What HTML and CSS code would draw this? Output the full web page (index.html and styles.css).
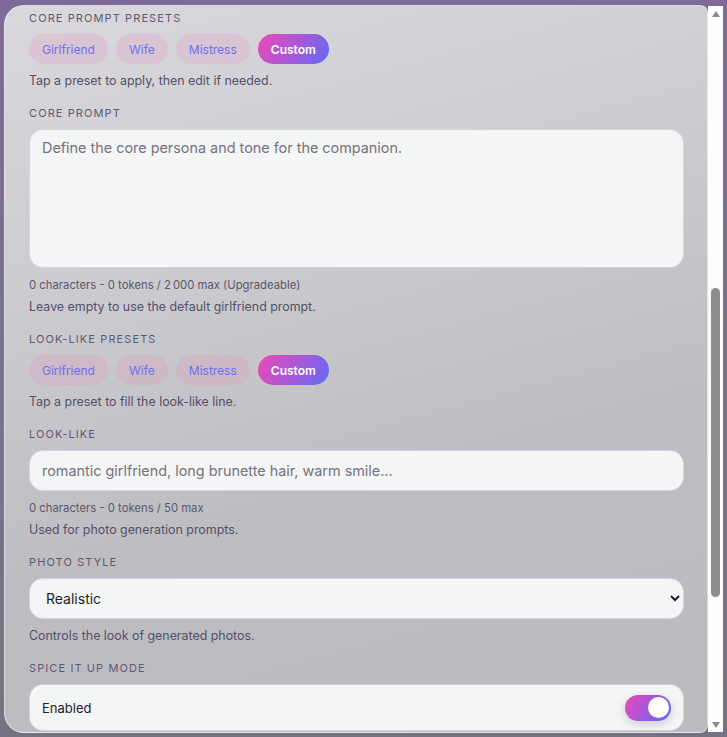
FILE: index.html
```html
<!DOCTYPE html>
<html lang="en">
<head>
<meta charset="utf-8">
<title>Companion settings</title>
<link rel="stylesheet" href="styles.css">
</head>
<body>
<div class="panel">
  <div class="content">
    <div class="form">
      <div class="field">
        <div class="label">Core prompt presets</div>
        <div class="chips">
          <button class="chip">Girlfriend</button>
          <button class="chip">Wife</button>
          <button class="chip">Mistress</button>
          <button class="chip active">Custom</button>
        </div>
        <p class="hint">Tap a preset to apply, then edit if needed.</p>
      </div>
      <div class="field">
        <div class="label">Core prompt</div>
        <textarea class="textarea" placeholder="Define the core persona and tone for the companion."></textarea>
        <p class="hint meta">0 characters - 0 tokens / 2&#8239;000 max (Upgradeable)</p>
        <p class="hint">Leave empty to use the default girlfriend prompt.</p>
      </div>
      <div class="field">
        <div class="label">Look-like presets</div>
        <div class="chips">
          <button class="chip">Girlfriend</button>
          <button class="chip">Wife</button>
          <button class="chip">Mistress</button>
          <button class="chip active">Custom</button>
        </div>
        <p class="hint">Tap a preset to fill the look-like line.</p>
      </div>
      <div class="field">
        <div class="label">Look-like</div>
        <input class="input" type="text" placeholder="romantic girlfriend, long brunette hair, warm smile...">
        <p class="hint meta">0 characters - 0 tokens / 50 max</p>
        <p class="hint">Used for photo generation prompts.</p>
      </div>
      <div class="field">
        <div class="label">Photo style</div>
        <select class="select">
          <option>Realistic</option>
          <option>Anime</option>
        </select>
        <p class="hint">Controls the look of generated photos.</p>
      </div>
      <div class="field">
        <div class="label">Spice it up mode</div>
        <div class="toggle-card"><span>Enabled</span><span class="switch"><span class="knob"></span></span></div>
      </div>
    </div>
  </div>
  <div class="scrollbar">
    <span class="arrow-up"></span>
    <span class="thumb"></span>
    <span class="arrow-down"></span>
  </div>
</div>
</body>
</html>
```

FILE: styles.css
```css
* { box-sizing: border-box; }

html, body {
  margin: 0;
  height: 100%;
  overflow: hidden;
}

body {
  background: linear-gradient(180deg, #80699a 0%, #7b7289 45%, #777282 100%);
  font-family: Inter, "Noto Sans", sans-serif;
  padding: 5px 4px 4px 4px;
}

.panel {
  display: flex;
  height: 728px;
}

.content {
  flex: 1;
  overflow: hidden;
  border-radius: 20px 8px 8px 20px;
  border: 1px solid rgba(255, 255, 255, 0.45);
  background: linear-gradient(165deg, #d9d8dd 0%, #cbcbcf 35%, #bdbdc1 65%, #bcbcc0 100%);
}

.scrollbar {
  width: 15px;
  margin: 1px 0 1px;
  background: #fdfdfd;
  display: flex;
  flex-direction: column;
  align-items: center;
}

.arrow-up {
  margin-top: 5px;
  width: 0;
  height: 0;
  border-left: 4.5px solid transparent;
  border-right: 4.5px solid transparent;
  border-bottom: 6px solid #8b8b8b;
}

.thumb {
  margin-top: 271px;
  width: 9px;
  height: 309px;
  border-radius: 4.5px;
  background: #8d8d8d;
}

.arrow-down {
  margin-top: auto;
  margin-bottom: 4px;
  width: 0;
  height: 0;
  border-left: 4.5px solid transparent;
  border-right: 4.5px solid transparent;
  border-top: 6px solid #8b8b8b;
}

.form {
  display: flex;
  flex-direction: column;
  gap: 16px;
  padding: 4px 23px 0 24px;
}

.field {
  display: flex;
  flex-direction: column;
}

.label {
  font-size: 11px;
  line-height: 16px;
  letter-spacing: 1.1px;
  text-transform: uppercase;
  color: #5f5a72;
  margin-bottom: 8px;
}

.hint {
  margin: 9px 0 0;
  font-size: 12.4px;
  line-height: 16px;
  color: #554f69;
}

.hint + .hint { margin-top: 6px; }

.meta {
  font-size: 11.3px;
  color: #5b566b;
}

.chips {
  display: flex;
  gap: 8px;
}

.chip {
  height: 30px;
  padding: 0 13px;
  border: none;
  border-radius: 15px;
  background: rgba(244, 114, 182, 0.16);
  color: #6a72ef;
  font-family: inherit;
  font-size: 12px;
  font-weight: 400;
}

.chip.active {
  background: linear-gradient(120deg, #ec4ab8 0%, #a459d8 55%, #5e6cf6 100%);
  color: #ffffff;
  font-weight: 600;
}

.input, .textarea, .select, .toggle-card {
  width: 100%;
  background: #f4f5f5;
  border: 1px solid #d4d5e1;
  border-radius: 14px;
  font-family: inherit;
  color: #1f1c2b;
}

.input {
  height: 41px;
  padding: 0 12px;
  font-size: 14.4px;
}

.textarea {
  height: 139px;
  padding: 8px 12px;
  font-size: 14.4px;
  line-height: 20px;
  resize: none;
  display: block;
}

.input::placeholder, .textarea::placeholder {
  color: #76737e;
}

.select {
  height: 41px;
  padding: 0 10px 0 12px;
  font-size: 14px;
}

.toggle-card {
  height: 47px;
  padding: 0 12px;
  display: flex;
  align-items: center;
  justify-content: space-between;
  font-size: 13px;
}

.switch {
  width: 46px;
  height: 26px;
  border-radius: 13px;
  background: linear-gradient(120deg, #ec4ab8 0%, #9a5ade 55%, #5d6af3 100%);
  display: flex;
  align-items: center;
  justify-content: flex-end;
  padding: 0 2px;
  box-shadow: 0 3px 8px rgba(60, 40, 90, 0.2);
}

.knob {
  width: 21px;
  height: 21px;
  border-radius: 50%;
  background: #ffffff;
}
```
